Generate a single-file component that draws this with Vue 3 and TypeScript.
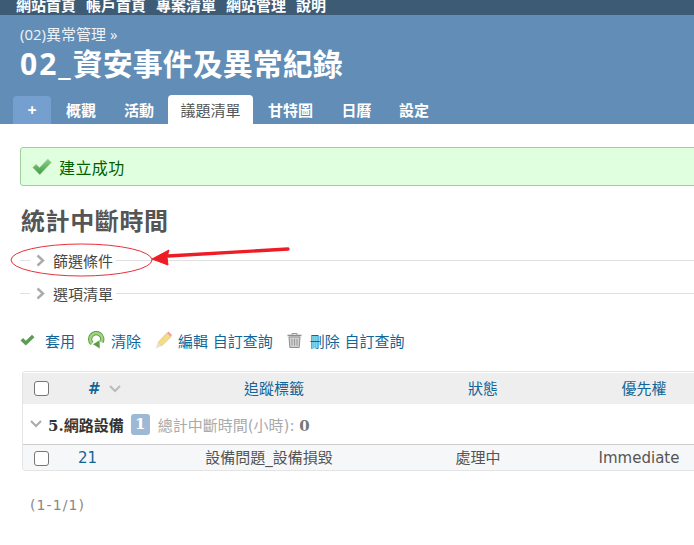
<script setup lang="ts">
const topMenu = ['網站首頁', '帳戶首頁', '專案清單', '網站管理', '說明']
const tabs = [
  { label: '概觀', width: 58 },
  { label: '活動', width: 58 },
  { label: '議題清單', width: 85, selected: true },
  { label: '甘特圖', width: 75 },
  { label: '日曆', width: 57 },
  { label: '設定', width: 58 },
]
</script>

<template>
  <div class="page">
    <div class="top-menu">
      <a v-for="item in topMenu" :key="item">{{ item }}</a>
    </div>

    <div class="header">
      <div class="crumb">(02)異常管理 »</div>
      <h1><span class="title-no">02_</span>資安事件及異常紀錄</h1>
      <div class="tabs">
        <a class="tab-new">+</a>
        <a
          v-for="tab in tabs"
          :key="tab.label"
          class="tab"
          :class="{ selected: tab.selected }"
          :style="{ width: tab.width + 'px' }"
        >{{ tab.label }}</a>
      </div>
    </div>

    <div class="content">
      <div class="flash">
        <svg class="flash-check" width="20" height="18" viewBox="0 0 20 18">
          <defs>
            <linearGradient id="flashGreen" x1="0" y1="0" x2="0" y2="1">
              <stop offset="0" stop-color="#8fd08a" />
              <stop offset="1" stop-color="#3f9a45" />
            </linearGradient>
          </defs>
          <path d="M0.8 9.5 L4 6.3 L7.6 9.6 L15.8 1 L19.4 4.4 L7.8 16.8 Z" fill="url(#flashGreen)" stroke="#a9d6a6" stroke-width="0.6" />
        </svg>
        <span class="flash-text">建立成功</span>
      </div>

      <h2>統計中斷時間</h2>

      <div class="fold">
        <span class="rule short"></span>
        <svg class="chev" width="9" height="13" viewBox="0 0 9 13"><path d="M1.5 1.5 L7 6.5 L1.5 11.5" fill="none" stroke="#aaa" stroke-width="2.4" /></svg>
        <span class="fold-label">篩選條件</span>
        <span class="rule"></span>
      </div>
      <div class="fold second">
        <span class="rule short"></span>
        <svg class="chev" width="9" height="13" viewBox="0 0 9 13"><path d="M1.5 1.5 L7 6.5 L1.5 11.5" fill="none" stroke="#aaa" stroke-width="2.4" /></svg>
        <span class="fold-label">選項清單</span>
        <span class="rule"></span>
      </div>

      <div class="actions">
        <a class="act apply">
          <svg width="15" height="12" viewBox="0 0 15 12"><path d="M0.5 6.5 L3 4 L5.8 6.8 L12 0.8 L14.5 3.2 L5.8 11.5 Z" fill="#5e9b57" /></svg>
          <span>套用</span>
        </a>
        <a class="act clear">
          <svg width="17" height="18" viewBox="0 0 17 18">
            <path d="M4 12.5 A6 6 0 1 1 13.5 11" fill="none" stroke="#5f9f45" stroke-width="4.4" />
            <path d="M4 12.5 A6 6 0 1 1 13.5 11" fill="none" stroke="#a3d283" stroke-width="2.6" />
            <path d="M5 13.2 L11.5 9.2 L11.8 17.6 Z" fill="#5a9f42" />
          </svg>
          <span>清除</span>
        </a>
        <a class="act edit">
          <svg width="17" height="18" viewBox="0 0 17 18">
            <path d="M3 11.5 L12 1.8 L16 5.8 L6.5 15 Z" fill="#f3dc85" stroke="#dcc06a" stroke-width="0.6" />
            <path d="M12 2 L13.6 0.6 L17 4 L15.8 5.8 Z" fill="#ef9f9f" />
            <path d="M3 11.5 L6.5 15 L0.6 17.4 Z" fill="#eadfca" />
          </svg>
          <span>編輯 自訂查詢</span>
        </a>
        <a class="act del">
          <svg width="15" height="16" viewBox="0 0 15 16">
            <path d="M0.5 3.5 H14.5" stroke="#8f8f8f" stroke-width="1.6" />
            <path d="M5 3 V1.5 H10 V3" fill="none" stroke="#9a9a9a" />
            <path d="M2 5 H13 L12.2 15.5 H2.8 Z" fill="#d0d0d0" stroke="#8f8f8f" />
            <path d="M5 7 V13.5 M7.5 7 V13.5 M10 7 V13.5" stroke="#999" />
          </svg>
          <span>刪除 自訂查詢</span>
        </a>
      </div>

      <div class="list">
        <div class="row head">
          <span class="c-check"><i class="box"></i></span>
          <span class="c-id">
            <b>#</b>
            <svg width="12" height="8" viewBox="0 0 12 8"><path d="M1 1 L6 6 L11 1" fill="none" stroke="#bbb" stroke-width="2" /></svg>
          </span>
          <span class="c-tracker">追蹤標籤</span>
          <span class="c-status">狀態</span>
          <span class="c-priority">優先權</span>
        </div>
        <div class="group">
          <svg width="12" height="8" viewBox="0 0 12 8"><path d="M1 1 L6 6 L11 1" fill="none" stroke="#aaa" stroke-width="2" /></svg>
          <span class="group-name"><b>5.</b>網路設備</span>
          <span class="badge">1</span>
          <span class="total">總計中斷時間(小時): <b>0</b></span>
        </div>
        <div class="row issue">
          <span class="c-check"><i class="box"></i></span>
          <span class="c-id"><a>21</a></span>
          <span class="c-tracker">設備問題_設備損毀</span>
          <span class="c-status">處理中</span>
          <span class="c-priority">Immediate</span>
        </div>
      </div>

      <p class="pages">(1-1/1)</p>
    </div>

    <!-- hand drawn annotation over the screenshot -->
    <svg class="markup" width="694" height="545" viewBox="0 0 694 545">
      <ellipse cx="81.5" cy="260" rx="70.5" ry="16" fill="none" stroke="#e8303c" stroke-width="1" />
      <path d="M288 249 L168 256" stroke="#ee1c25" stroke-width="3.4" stroke-linecap="round" />
      <path d="M152 259 L169 250 L167 257 L168 265 Z" fill="#ee1c25" stroke="#ee1c25" stroke-linejoin="round" />
    </svg>
  </div>
</template>

<style>
html,
body {
  margin: 0;
  overflow: hidden;
  background: #fff;
}
</style>

<style scoped>
.page {
  position: relative;
  width: 694px;
  height: 545px;
  overflow: hidden;
  font-family: "DejaVu Sans", "Noto Sans CJK TC", sans-serif;
  font-size: 15px;
  color: #484848;
}

.top-menu {
  display: flex;
  gap: 10px;
  height: 15px;
  padding-left: 16px;
  background: #3e5b76;
  color: #fff;
  font-size: 15px;
  font-weight: 700;
  line-height: 11px;
  overflow: hidden;
  font-family: "Open Sans", "Noto Sans CJK TC", sans-serif;
}

.header {
  height: 109px;
  padding: 0 0 0 20px;
  box-sizing: border-box;
  background: #628db6;
  color: #fff;
  font-family: "Open Sans", "Noto Sans CJK TC", sans-serif;
}

.crumb {
  padding-top: 10px;
  font-size: 15px;
  line-height: 18px;
  color: #f0f4f8;
}

h1 {
  margin: 1px 0 0;
  font-size: 30px;
  line-height: 40px;
  font-weight: 700;
}

.title-no {
  letter-spacing: 2px;
}

.tabs {
  display: flex;
  align-items: flex-end;
  height: 29px;
  margin: 11px 0 0 -7px;
  font-size: 15px;
  font-weight: 700;
}

.tab-new {
  width: 38px;
  height: 28px;
  margin-right: 1px;
  border-radius: 4px 4px 0 0;
  background: #759fcf;
  text-align: center;
  line-height: 29px;
  font-size: 16px;
}

.tab {
  height: 29px;
  line-height: 30px;
  text-align: center;
  color: #fff;
  border-radius: 4px 4px 0 0;
}

.tab.selected {
  background: #fff;
  color: #555;
  font-weight: 400;
}

.content {
  padding: 23px 0 0 20px;
}

.flash {
  display: flex;
  align-items: center;
  height: 39px;
  box-sizing: border-box;
  padding-left: 11px;
  gap: 7px;
  width: 700px;
  background: #dfffdf;
  border: 1px solid #9fcf9f;
  border-radius: 3px;
  color: #005f00;
  font-size: 16px;
}

.flash-text {
  letter-spacing: 0.4px;
}

h2 {
  margin: 19px 0 0 1px;
  font-size: 24px;
  line-height: 32px;
  font-weight: 700;
  letter-spacing: 0.6px;
  color: #555;
  font-family: "Open Sans", "Noto Sans CJK TC", sans-serif;
}

.fold {
  display: flex;
  align-items: center;
  height: 18px;
  margin-top: 14px;
  width: 680px;
}

.fold.second {
  margin-top: 15px;
}

.rule {
  flex: 1;
  height: 1px;
  background: #e0e0e0;
}

.rule.short {
  flex: none;
  width: 10px;
}

.chev {
  margin: 0 4px 0 6px;
}

.fold-label {
  padding: 0 3px 0 4px;
}

.actions {
  display: flex;
  align-items: center;
  height: 20px;
  margin-top: 28px;
  color: #169;
}

.act {
  display: flex;
  align-items: center;
}

.act span {
  white-space: nowrap;
}

.apply svg {
  margin-right: 10px;
}

.apply {
  margin-right: 13px;
}

.clear svg {
  margin-right: 6px;
}

.clear {
  margin-right: 14px;
}

.edit svg {
  margin-right: 6px;
}

.edit {
  margin-right: 14px;
}

.del svg {
  margin-right: 8px;
}

.list {
  margin: 21px 0 0 2px;
  width: 700px;
  height: 100px;
  box-sizing: border-box;
  border: 1px solid #e4e4e4;
  border-radius: 3px;
  overflow: hidden;
}

.row {
  display: grid;
  grid-template-columns: 37px 120px 188px 230px 92px;
  align-items: center;
}

.head {
  height: 31px;
  margin-top: 1px;
  background: #eee;
  color: #169;
}

.issue {
  height: 27px;
  background: #f6f7f8;
  border-top: 1px solid #ccc;
  box-sizing: border-box;
}

.group {
  display: flex;
  align-items: center;
  height: 40px;
  padding-left: 7px;
}

.group-name {
  margin-left: 6px;
  color: #333;
  font-weight: 700;
}

.group-name b {
  font-family: "DejaVu Serif", serif;
}

.badge {
  width: 19px;
  height: 21px;
  margin: 0 8px 0 7px;
  border-radius: 3px;
  background: #9db9d5;
  color: #fff;
  text-align: center;
  line-height: 21px;
  font-family: "DejaVu Serif", serif;
  font-weight: 700;
}

.total {
  color: #aaa;
}

.total b {
  color: #777;
  font-family: "DejaVu Serif", serif;
}

.c-check {
  display: flex;
  justify-content: center;
}

.box {
  display: block;
  width: 13px;
  height: 13px;
  border: 1px solid #767676;
  border-radius: 3px;
  background: #fff;
}

.c-id {
  display: flex;
  align-items: center;
  gap: 8px;
  padding-left: 28px;
}

.issue .c-id {
  padding-left: 18px;
  color: #169;
}

.c-tracker,
.c-status,
.c-priority {
  text-align: center;
  white-space: nowrap;
}

.head .c-tracker,
.head .c-status,
.head .c-priority {
  margin-top: -2px;
}

.issue .c-tracker,
.issue .c-status,
.issue .c-priority {
  padding-right: 10px;
  color: #555;
}

.issue .c-tracker,
.issue .c-status {
  margin-top: -3px;
}

.pages {
  margin: 24px 0 0 10px;
  font-size: 14px;
  line-height: 20px;
  letter-spacing: 1.1px;
  color: #888;
}

.markup {
  position: absolute;
  left: 0;
  top: 0;
  pointer-events: none;
}
</style>
